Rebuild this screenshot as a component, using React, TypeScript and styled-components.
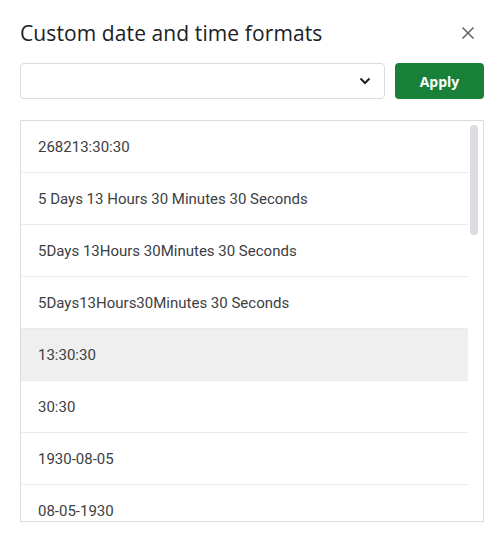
import React, { useState } from "react";
import styled, { createGlobalStyle } from "styled-components";

const GlobalStyle = createGlobalStyle`
  html, body {
    margin: 0;
    padding: 0;
    background: #ffffff;
  }
  body {
    font-family: Roboto, "Liberation Sans", Arial, sans-serif;
  }
`;

const Dialog = styled.div`
  width: 501px;
  height: 540px;
  box-sizing: border-box;
  padding: 18px 17px 0 20px;
  background: #fff;
`;

const Header = styled.div`
  display: flex;
  align-items: center;
  justify-content: space-between;
  height: 30px;
`;

const Title = styled.h1`
  margin: 0;
  font-family: "Open Sans", Roboto, sans-serif;
  font-weight: 400;
  font-size: 21px;
  letter-spacing: 0.1px;
  color: #202124;
`;

const CloseButton = styled.button`
  width: 24px;
  height: 24px;
  margin-right: 4px;
  border: none;
  background: none;
  padding: 0;
  display: flex;
  align-items: center;
  justify-content: center;
  color: #5f6368;
  cursor: pointer;
`;

const Controls = styled.div`
  display: flex;
  gap: 10px;
  margin-top: 15px;
`;

const SelectBox = styled.div`
  flex: 1;
  height: 36px;
  box-sizing: border-box;
  border: 1px solid #dadce0;
  border-radius: 4px;
  display: flex;
  align-items: center;
  justify-content: flex-end;
  padding-right: 13px;
  color: #202124;
`;

const ApplyButton = styled.button`
  width: 89px;
  height: 36px;
  border: none;
  border-radius: 4px;
  background: #188038;
  color: #fff;
  font-family: "Open Sans", Roboto, sans-serif;
  font-weight: 700;
  font-size: 14px;
  cursor: pointer;
`;

const ListFrame = styled.div`
  position: relative;
  margin-top: 21px;
  height: 402px;
  box-sizing: border-box;
  border: 1px solid #dadce0;
  overflow: hidden;
`;

const List = styled.ul`
  list-style: none;
  margin: 0;
  padding: 0;
  margin-right: 15px;
`;

const Row = styled.li<{ $active?: boolean }>`
  height: 51px;
  display: flex;
  align-items: center;
  padding-left: 17px;
  font-size: 15px;
  color: #3c4043;
  background: ${(p) => (p.$active ? "#efefef" : "transparent")};
  border-bottom: 1px solid #e8eaed;
`;

const ScrollThumb = styled.div`
  position: absolute;
  top: 4px;
  right: 5px;
  width: 8px;
  height: 110px;
  border-radius: 4px;
  background: #dadce0;
`;

const formats = [
  "268213:30:30",
  "5 Days 13 Hours 30 Minutes 30 Seconds",
  "5Days 13Hours 30Minutes 30 Seconds",
  "5Days13Hours30Minutes 30 Seconds",
  "13:30:30",
  "30:30",
  "1930-08-05",
  "08-05-1930",
];

export default function App() {
  const [active] = useState(4);
  return (
    <>
      <GlobalStyle />
      <Dialog>
        <Header>
          <Title>Custom date and time formats</Title>
          <CloseButton aria-label="Close">
            <svg width="14" height="14" viewBox="0 0 14 14">
              <path d="M1.5 1.5L12.5 12.5M12.5 1.5L1.5 12.5" stroke="currentColor" strokeWidth="1.5" />
            </svg>
          </CloseButton>
        </Header>
        <Controls>
          <SelectBox>
            <svg width="12" height="8" viewBox="0 0 12 8">
              <path d="M1.5 1.5L6 6L10.5 1.5" fill="none" stroke="currentColor" strokeWidth="2" />
            </svg>
          </SelectBox>
          <ApplyButton>Apply</ApplyButton>
        </Controls>
        <ListFrame>
          <List>
            {formats.map((f, i) => (
              <Row key={f} $active={i === active}>
                {f}
              </Row>
            ))}
          </List>
          <ScrollThumb />
        </ListFrame>
      </Dialog>
    </>
  );
}
